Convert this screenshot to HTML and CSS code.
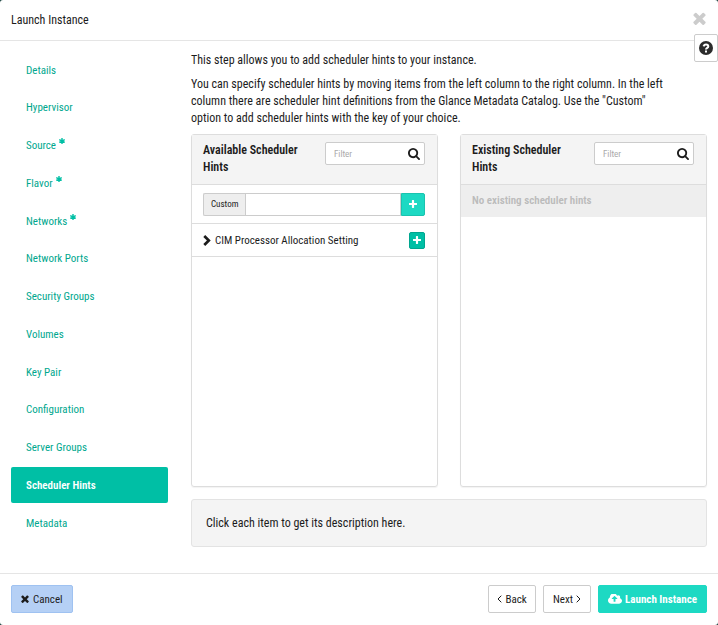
FILE: index.html
```html
<!DOCTYPE html>
<html lang="en">
<head>
  <meta charset="UTF-8">
  <meta name="viewport" content="width=device-width, initial-scale=1.0">
  <title>Launch Instance</title>
  <link rel="stylesheet" href="styles.css">
</head>
<body>
  <!-- icons -->
  <svg class="sprite" aria-hidden="true">
    <symbol id="times" viewBox="300 300 1192 1256"><path d="M1490 1322q0 40-28 68l-136 136q-28 28-68 28t-68-28l-294-294-294 294q-28 28-68 28t-68-28l-136-136q-28-28-28-68t28-68l294-294-294-294q-28-28-28-68t28-68l136-136q28-28 68-28t68 28l294 294 294-294q28-28 68-28t68 28l136 136q28 28 28 68t-28 68l-294 294 294 294q28 28 28 68z"/></symbol>
    <symbol id="plus" viewBox="192 128 1408 1408"><path d="M1600 736v192q0 40-28 68t-68 28h-416v416q0 40-28 68t-68 28h-192q-40 0-68-28t-28-68v-416h-416q-40 0-68-28t-28-68v-192q0-40 28-68t68-28h416v-416q0-40 28-68t68-28h192q40 0 68 28t28 68v416h416q40 0 68 28t28 68z"/></symbol>
    <symbol id="search" viewBox="64 128 1664 1664"><path d="M1216 832q0-185-131.5-316.5t-316.5-131.5-316.5 131.5-131.5 316.5 131.5 316.5 316.5 131.5 316.5-131.5 131.5-316.5zm512 832q0 52-38 90t-90 38q-54 0-90-38l-343-342q-179 124-399 124-143 0-273.5-55.5t-225-150-150-225-55.5-273.5 55.5-273.5 150-225 225-150 273.5-55.5 273.5 55.5 225 150 150 225 55.5 273.5q0 220-124 399l343 343q37 37 37 90z"/></symbol>
    <symbol id="question" viewBox="0 0 14 14">
      <circle cx="7" cy="7" r="7"/>
      <path d="M4.500 5.300C5 4 5.900 3.500 7 3.500c1.300 0 2.300.8 2.300 1.900C9.300 6.900 7 6.900 7 8.600" fill="none" stroke="#fff" stroke-width="2"/>
      <path d="M6 9.500h2v2H6z" fill="#fff"/>
    </symbol>
    <symbol id="cloud" viewBox="0 256 1920 1280"><path d="M1280 864q0-14-9-23l-352-352q-9-9-23-9t-23 9l-351 351q-10 12-10 24 0 14 9 23t23 9h224v352q0 13 9.5 22.5t22.5 9.5h192q13 0 22.5-9.5t9.5-22.5v-352h224q13 0 22.5-9.5t9.5-22.5zm640 288q0 159-112.5 271.5t-271.5 112.5h-1088q-185 0-316.5-131.5t-131.5-316.5q0-130 70-240t188-165q-2-30-2-43 0-212 150-362t362-150q156 0 285.5 87t188.5 231q71-62 166-62 106 0 181 75t75 181q0 76-41 138 130 31 213.5 135.5t83.5 238.5z"/></symbol>
    <symbol id="chevron" viewBox="0 0 8 11"><path d="M2.200 0 7.700 5.500 2.200 11 .3 9.100 3.900 5.500.3 1.900z"/></symbol>
    <symbol id="asterisk" viewBox="0 0 6 6"><path d="M3 0v6M.3 1.500l5.400 3M5.700 1.500.3 4.500" fill="none" stroke="currentColor" stroke-width="1.400"/></symbol>
    <symbol id="left" viewBox="0 0 5 8"><path d="M4.300.7 1 4l3.300 3.300" fill="none" stroke="currentColor"/></symbol>
    <symbol id="right" viewBox="0 0 5 8"><path d="M.7.7 4 4 .7 7.300" fill="none" stroke="currentColor"/></symbol>
  </svg>

  <div class="modal">
    <header class="modal-header">
      <h1>Launch Instance</h1>
      <button class="close" type="button" aria-label="Close"><svg class="icon-close"><use href="#times"/></svg></button>
    </header>

    <div class="modal-body">
      <button class="help" type="button" aria-label="Help"><svg class="icon-help"><use href="#question"/></svg></button>

      <nav class="steps">
        <a href="#">Details</a>
        <a href="#">Hypervisor</a>
        <a href="#">Source <svg class="required"><use href="#asterisk"/></svg></a>
        <a href="#">Flavor <svg class="required"><use href="#asterisk"/></svg></a>
        <a href="#">Networks <svg class="required"><use href="#asterisk"/></svg></a>
        <a href="#">Network Ports</a>
        <a href="#">Security Groups</a>
        <a href="#">Volumes</a>
        <a href="#">Key Pair</a>
        <a href="#">Configuration</a>
        <a href="#">Server Groups</a>
        <a href="#" class="active">Scheduler Hints</a>
        <a href="#">Metadata</a>
      </nav>

      <main class="content">
        <p>This step allows you to add scheduler hints to your instance.</p>
        <p>You can specify scheduler hints by moving items from the left column to the right column. In the left column there are scheduler hint definitions from the Glance Metadata Catalog. Use the "Custom" option to add scheduler hints with the key of your choice.</p>

        <div class="panels">
          <section class="panel">
            <div class="panel-heading">
              <h2>Available Scheduler Hints</h2>
              <div class="filter">
                <input type="text" placeholder="Filter" aria-label="Filter available hints">
                <svg class="icon-search"><use href="#search"/></svg>
              </div>
            </div>
            <div class="row custom-row">
              <label for="custom">Custom</label>
              <input type="text" id="custom">
              <button class="add" type="button" aria-label="Add custom hint"><svg class="icon-plus"><use href="#plus"/></svg></button>
            </div>
            <div class="row">
              <svg class="icon-chevron"><use href="#chevron"/></svg>
              <span class="row-name">CIM Processor Allocation Setting</span>
              <button class="add-small" type="button" aria-label="Add"><svg class="icon-plus"><use href="#plus"/></svg></button>
            </div>
          </section>

          <section class="panel">
            <div class="panel-heading">
              <h2>Existing Scheduler Hints</h2>
              <div class="filter">
                <input type="text" placeholder="Filter" aria-label="Filter existing hints">
                <svg class="icon-search"><use href="#search"/></svg>
              </div>
            </div>
            <div class="empty">No existing scheduler hints</div>
          </section>
        </div>

        <div class="description">Click each item to get its description here.</div>
      </main>
    </div>

    <footer class="modal-footer">
      <button class="btn cancel" type="button"><svg class="icon-cancel"><use href="#times"/></svg>Cancel</button>
      <button class="btn" type="button"><svg class="icon-angle"><use href="#left"/></svg>Back</button>
      <button class="btn" type="button">Next<svg class="icon-angle"><use href="#right"/></svg></button>
      <button class="btn launch" type="button"><svg class="icon-cloud"><use href="#cloud"/></svg>Launch Instance</button>
    </footer>
  </div>
</body>
</html>
```

FILE: styles.css
```css
*{
  box-sizing: border-box;
}
body{
  margin:0;
  background-color: #17413c;
  color:#1c1c1c;
  font-family: "Roboto Condensed", Roboto, sans-serif;
  font-size:11px;
  line-height:17px;
}
h1,h2,p{
  margin:0;
}
button,input{
  font:inherit;
  color:inherit;
}
button{
  padding:0;
  cursor: pointer;
}
svg{
  fill:currentColor;
  flex:none;
}
.sprite{
  display:none;
}
.modal{
  min-height:100vh;
  display:flex;
  flex-direction: column;
  background-color: #fff;
  border-radius:3px;
}
.modal-header{
  display:flex;
  justify-content: space-between;
  align-items: center;
  height:41px;
  padding:0 12px 0 11px;
  border-bottom:1px solid #e5e5e5;
}
.modal-header h1{
  font-size:12px;
  font-weight:normal;
}
.close{
  display:flex;
  border:0;
  background:none;
  color:#ccc;
  padding-bottom:4px;
}
.icon-close{
  width:13px;
  height:13px;
}
.modal-body{
  flex:1;
  display:grid;
  grid-template-columns: 157px minmax(0, 1fr);
  column-gap:23px;
  padding:11px 11px 26px;
  position: relative;
}
/* sits over the header line */
.help{
  position: absolute;
  top:-7px;
  right:0;
  width:24px;
  height:28px;
  display:flex;
  justify-content: center;
  align-items: center;
  background-color: #fff;
  color:#2b2b2b;
  border:1px solid #ccc;
  border-radius:2px;
}
.icon-help{
  width:14px;
  height:14px;
}
.steps{
  display:flex;
  flex-direction: column;
  justify-content: space-between;
  padding-bottom:6px;
}
.steps a{
  display:flex;
  align-items: center;
  height:36px;
  padding:0 15px;
  border-radius:2px;
  color:#00a78e;
  text-decoration: none;
}
.steps .active{
  background-color: #00bfa5;
  color:#fff;
  font-weight:600;
}
.required{
  width:6px;
  height:6px;
  margin:0 0 9px 3px;
  color:#00bfa5;
}
.content{
  display:flex;
  flex-direction: column;
}
.content p{
  margin-bottom:7px;
  padding-right:36px;
  font-size:12px;
}
.panels{
  flex:1;
  display:grid;
  grid-template-columns: repeat(2, minmax(0, 1fr));
  gap:22px;
}
.panel{
  border:1px solid #ddd;
  border-radius:3px;
  box-shadow:0 1px 1px rgba(0,0,0,.05);
}
.panel-heading{
  display:flex;
  justify-content: space-between;
  align-items: flex-start;
  height:50px;
  padding:7px 12px 0 11px;
  background-color: #f4f4f4;
  border-bottom:1px solid #ddd;
}
.panel-heading h2{
  width:110px;
  font-size:12px;
  font-weight:600;
}
.filter{
  position: relative;
  width:100px;
}
.filter input{
  display:block;
  width:100%;
  height:23px;
  padding:0 24px 0 8px;
  border:1px solid #ccc;
  border-radius:2px;
  font-size:9px;
}
.filter input::placeholder{
  color:#aaa;
}
.icon-search{
  position: absolute;
  top:6px;
  right:5px;
  width:12px;
  height:12px;
}
.row{
  display:flex;
  align-items: center;
  height:33px;
  padding:0 12px 0 11px;
  border-bottom:1px solid #ddd;
}
.custom-row{
  height:39px;
}
.custom-row label{
  height:23px;
  padding:2px 7px;
  background-color: #eee;
  border:1px solid #ccc;
  border-right:0;
  border-radius:2px 0 0 2px;
  font-size:9px;
}
.custom-row input{
  flex:1;
  min-width:0;
  height:23px;
  border:1px solid #ccc;
}
.add,.add-small{
  display:flex;
  justify-content: center;
  align-items: center;
  color:#fff;
}
.add{
  width:24px;
  height:23px;
  background-color: #1dd9c3;
  border:1px solid #1ac3af;
  border-radius:0 2px 2px 0;
}
.add-small{
  width:16px;
  height:17px;
  background-color: #00bfa5;
  border:1px solid #00a68f;
  border-radius:2px;
}
.icon-plus{
  width:8px;
  height:8px;
}
.icon-chevron{
  width:8px;
  height:11px;
}
.row-name{
  flex:1;
  margin-left:4px;
}
.empty{
  padding:7px 11px 8px;
  background-color: #eee;
  color:#bbb;
  font-weight:600;
}
.description{
  margin-top:12px;
  padding:15px 14px 14px;
  background-color: #f4f4f4;
  border:1px solid #e3e3e3;
  border-radius:3px;
  font-size:12px;
}
.modal-footer{
  display:flex;
  gap:7px;
  padding:11px 11px 12px;
  border-top:1px solid #e5e5e5;
}
.btn{
  display:flex;
  justify-content: center;
  align-items: center;
  gap:3px;
  min-width:48px;
  height:28px;
  padding:0 8px;
  background-color: #fff;
  border:1px solid #ccc;
  border-radius:2px;
}
.cancel{
  gap:4px;
  padding:0 9px;
  margin-right:auto;
  background-color: #b5d0f5;
  border-color:#9fc2f1;
}
.launch{
  padding:0 9px;
  background-color: #1dd9c3;
  border-color:#1dd9c3;
  color:#fff;
  font-weight:bold;
}
.icon-cancel{
  width:8px;
  height:8px;
}
.icon-angle{
  width:5px;
  height:8px;
}
.icon-cloud{
  width:14px;
  height:10px;
}
```
